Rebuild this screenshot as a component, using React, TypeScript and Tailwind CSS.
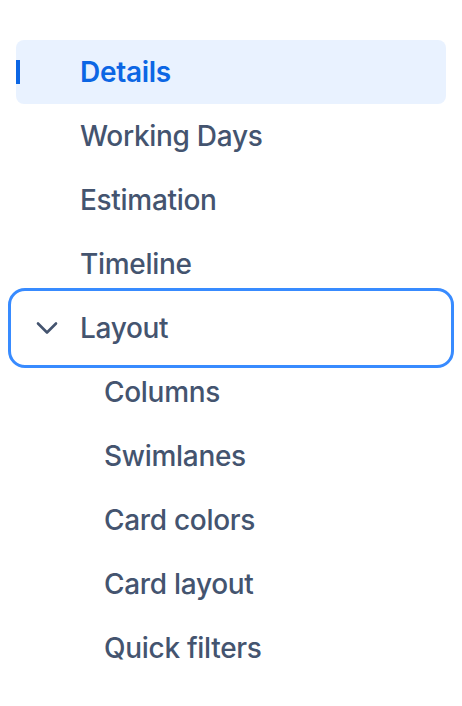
import React from "react";

type NavItem = {
    label: string;
    active?: boolean;
    expanded?: boolean;
    focused?: boolean;
    level?: number;
};

const items: NavItem[] = [
    { label: "Details", active: true },
    { label: "Working Days" },
    { label: "Estimation" },
    { label: "Timeline" },
    { label: "Layout", expanded: true, focused: true },
    { label: "Columns", level: 1 },
    { label: "Swimlanes", level: 1 },
    { label: "Card colors", level: 1 },
    { label: "Card layout", level: 1 },
    { label: "Quick filters", level: 1 },
];

function Chevron() {
    return (
        <svg width="22" height="22" viewBox="0 0 22 22" fill="none" stroke="currentColor" strokeWidth={2.6} strokeLinecap="round" strokeLinejoin="round">
            <path d="M2 6.5l9 9 9-9" />
        </svg>
    );
}

export default function App() {
    return (
        <div className="w-[462px] h-[706px] bg-white pt-[40px] px-[16px] font-['Inter',sans-serif]">
            <nav className="flex flex-col">
                {items.map((item) => (
                    <div
                        key={item.label}
                        className={`relative h-[64px] flex items-center rounded-[8px] ${
                            item.active ? "bg-[#E9F2FF] text-[#0C66E4]" : "text-[#44546F]"
                        } ${item.focused ? "outline outline-[3px] outline-[#388BFF] outline-offset-[5px] rounded-[9px]" : ""}`}
                    >
                        {item.active && <span className="absolute left-0 top-[20px] w-[4px] h-[24px] bg-[#0C66E4]" />}
                        <span className={`w-[22px] ml-[20px] flex items-center justify-center ${item.level ? "mr-[46px]" : "mr-[22px]"}`}>
                            {item.expanded && <Chevron />}
                        </span>
                        <span className={`text-[28px] leading-none tracking-[-0.3px] ${item.active ? "font-semibold" : "font-medium"}`}>{item.label}</span>
                    </div>
                ))}
            </nav>
        </div>
    );
}
